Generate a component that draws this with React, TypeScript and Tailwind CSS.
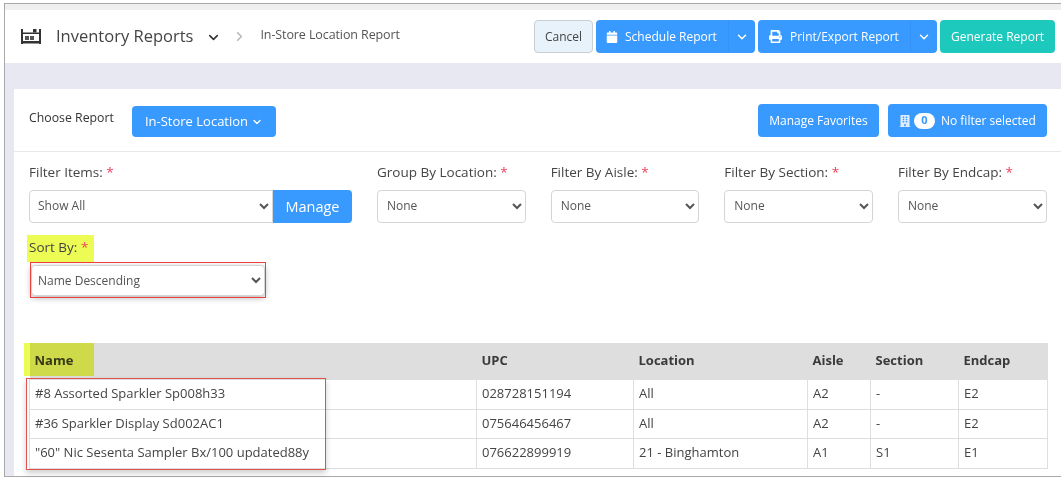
import { ChevronDown, ChevronRight } from "lucide-react";
import { FaBuilding, FaCalendar, FaPrint } from "react-icons/fa";

const rows = [
  { name: "#8 Assorted Sparkler Sp008h33", upc: "028728151194", location: "All", aisle: "A2", section: "-", endcap: "E2", height: "h-[30px]" },
  { name: "#36 Sparkler Display Sd002AC1", upc: "075646456467", location: "All", aisle: "A2", section: "-", endcap: "E2", height: "h-[29px]" },
  { name: '"60" Nic Sesenta Sampler Bx/100 updated88y', upc: "076622899919", location: "21 - Binghamton", aisle: "A1", section: "S1", endcap: "E1", height: "h-[30px]" },
];

function Label({ text }: { text: string }) {
  return (
    <label className="block text-[13.5px] leading-[18px] text-[#444]">
      {text} <span className="text-[#f0405a]">*</span>
    </label>
  );
}

function Select({ value, className }: { value: string; className: string }) {
  return (
    <select
      defaultValue={value}
      className={`border border-[#d5d5d5] bg-white text-[12px] text-[#555] ${className}`}
    >
      <option>{value}</option>
    </select>
  );
}

function FilterField({ label }: { label: string }) {
  return (
    <div className="w-[148.67px]">
      <Label text={label} />
      <Select value="None" className="mt-[9px] h-[33px] w-full rounded pb-[2px] pl-[5px]" />
    </div>
  );
}

function SplitButton({ icon, label, width }: { icon: React.ReactNode; label: string; width: string }) {
  return (
    <div className={`flex h-[33px] items-center rounded bg-[#3899ff] text-[12px] text-white ${width}`}>
      <span className="flex min-w-0 flex-1 items-center gap-[7px] pl-[10px]">
        {icon}
        {label}
      </span>
      <span className="flex h-full w-[27px] items-center justify-center border-l border-[#3593f7]">
        <ChevronDown className="size-[14px]" strokeWidth={2.5} />
      </span>
    </div>
  );
}

export default function App() {
  return (
    <div className="h-[478px] w-[1061px] overflow-hidden bg-white pl-[4px] pt-[3px] font-['Open_Sans',sans-serif]">
      <div className="relative flex h-[474px] flex-col border-y border-l border-y-[#a8a8a8] border-l-[#a8a8a8] bg-[#e7e8f2]">
        <div className="h-[6px] shrink-0 bg-[#efefef]" />
        <header className="flex h-[53px] shrink-0 items-center bg-white pl-[16px]">
          <svg viewBox="0 0 20 15" className="h-[15px] w-[20px] text-[#333]" fill="currentColor">
            <path d="M0 0h2v15H0zM18 0h2v15h-2z" />
            <path d="M2 3.5h16V5H2zM2 12h16v2.5H2z" />
            <path d="M12 0h3.500v3.500H12z" />
            <path d="M4 7h4v4H4zM9 7h4v4H9z" fill="#555" />
          </svg>
          <h1 className="ml-[15px] text-[16.5px] text-[#444]">Inventory Reports</h1>
          <ChevronDown className="ml-[13px] mt-[1px] size-[15px] text-[#333]" strokeWidth={2.5} />
          <ChevronRight className="ml-[11px] size-[15px] text-[#b5b5bd]" strokeWidth={2.5} />
          <span className="mb-[2px] ml-[13px] text-[12.5px] tracking-[-0.1px] text-[#555]">In-Store Location Report</span>
          <div className="ml-auto flex items-center gap-[3px] pr-[6px]">
            <button className="h-[33px] w-[59px] rounded border border-[#c9ced3] bg-[#e7f2fb] text-[12px] text-[#444]">Cancel</button>
            <SplitButton icon={<FaCalendar className="size-[12px]" />} label="Schedule Report" width="w-[159px]" />
            <SplitButton icon={<FaPrint className="mx-[1px] size-[13px]" />} label="Print/Export Report" width="w-[179px]" />
            <button className="h-[33px] w-[115px] rounded bg-[#1dc8bd] text-[12px] text-white">Generate Report</button>
          </div>
        </header>
        <main className="ml-[9px] mt-[26px] flex-1 bg-white">
          <section className="flex h-[63px] items-center border-b border-[#e8e8e8] pl-[15px] pr-[14px]">
            <span className="mb-[4px] w-[103px] text-[12.3px] text-[#333]">Choose Report</span>
            <button className="mt-[3px] flex h-[31px] w-[144px] items-center justify-center gap-[3px] rounded bg-[#3899ff] text-[13px] text-white">
              In-Store Location
              <ChevronDown className="size-[12px]" strokeWidth={2.5} />
            </button>
            <button className="ml-auto mt-[1px] h-[33px] w-[121px] rounded bg-[#3899ff] text-[12px] text-white">Manage Favorites</button>
            <button className="ml-[9px] mt-[1px] flex h-[33px] w-[159px] items-center rounded bg-[#3899ff] pl-[11px] text-[12px] text-white">
              <FaBuilding className="size-[12px] text-[#dfeeff]" />
              <span className="ml-[3px] flex h-[16px] w-[21px] items-center justify-center rounded-full bg-white text-[11px] font-bold text-[#3899ff]">0</span>
              <span className="ml-[6px]">No filter selected</span>
            </button>
          </section>
          <section className="pl-[15px] pr-[14px] pt-[11px]">
            <div className="flex items-start">
              <div className="w-[323px]">
                <Label text="Filter Items:" />
                <div className="mt-[9px] flex">
                  <Select value="Show All" className="h-[33px] w-[244px] rounded-l pb-[2px] pl-[4px]" />
                  <button className="h-[33px] w-[79px] rounded-r bg-[#3899ff] text-[14.5px] text-white">Manage</button>
                </div>
              </div>
              <div className="ml-[25px] flex gap-[25px]">
                <FilterField label="Group By Location:" />
                <FilterField label="Filter By Aisle:" />
                <FilterField label="Filter By Section:" />
                <FilterField label="Filter By Endcap:" />
              </div>
            </div>
            <div className="-ml-[2px] mt-[12px] flex h-[27px] w-[67px] items-center bg-[#edfb55] pb-[4px] pl-[2px]">
              <Label text="Sort By:" />
            </div>
            <div className="relative mt-[3px] h-[31px] w-[234px] translate-x-[2px]">
              <Select value="Name Descending" className="h-[31px] w-full rounded-sm pl-[2px] shadow-[0_2px_6px_rgba(0,0,0,0.3)]" />
              <div className="absolute -inset-x-[1px] -bottom-[2px] -top-[3px] border-[1.5px] border-[#ef4040]" />
            </div>
          </section>
          <div className="relative ml-[15px] mt-[47px] w-[1018px]">
            <div className="absolute -left-[5px] top-0 h-[33px] w-[70px] bg-[#edfb55] mix-blend-multiply" />
            <table className="w-full table-fixed border-collapse text-[13px] text-[#444]">
              <colgroup>
                <col className="w-[447px]" />
                <col className="w-[157px]" />
                <col className="w-[174px]" />
                <col className="w-[63px]" />
                <col className="w-[88px]" />
                <col className="w-[89px]" />
              </colgroup>
              <thead>
                <tr className="h-[36px] bg-[#dedede] text-left font-bold text-[#3a3a3a]">
                  <th className="pl-[5px]">Name</th>
                  <th className="pl-[5px]">UPC</th>
                  <th className="pl-[5px]">Location</th>
                  <th className="pl-[5px]">Aisle</th>
                  <th className="pl-[5px]">Section</th>
                  <th className="pl-[5px]">Endcap</th>
                </tr>
              </thead>
              <tbody>
                {rows.map((row) => (
                  <tr key={row.upc} className={row.height}>
                    <td className="border border-[#dedede] pl-[5px]">{row.name}</td>
                    <td className="border border-[#dedede] pl-[5px]">{row.upc}</td>
                    <td className="border border-[#dedede] pl-[5px]">{row.location}</td>
                    <td className="border border-[#dedede] pl-[5px]">{row.aisle}</td>
                    <td className="border border-[#dedede] pl-[5px]">{row.section}</td>
                    <td className="border border-[#dedede] pl-[5px]">{row.endcap}</td>
                  </tr>
                ))}
              </tbody>
            </table>
            <div className="absolute -left-[3px] top-[35px] h-[92px] w-[300px] border border-[#e25050] shadow-[0_3px_6px_rgba(0,0,0,0.2)]" />
          </div>
        </main>
      </div>
    </div>
  );
}
